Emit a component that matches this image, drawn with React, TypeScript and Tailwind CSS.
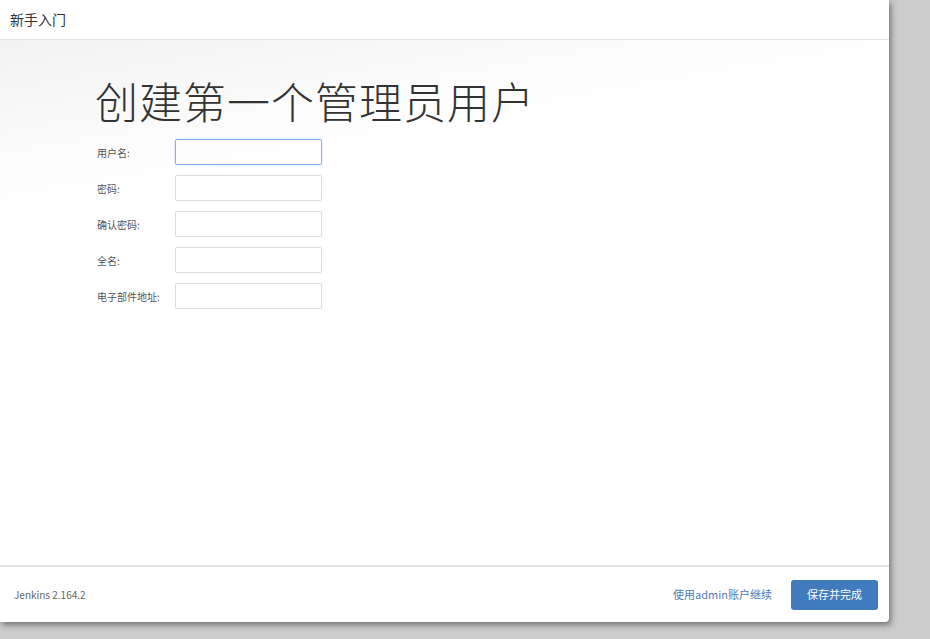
export default function App() {
  const font = { fontFamily: '"Noto Sans CJK SC", "Open Sans", sans-serif' };
  const rows = ["用户名:", "密码:", "确认密码:", "全名:", "电子部件地址:"];
  return (
    <div className="w-[930px] h-[639px] bg-[#cccccc] overflow-hidden" style={font}>
      <div className="w-[889px] h-[622px] bg-white rounded-br-[4px] shadow-[2px_3px_6px_rgba(0,0,0,0.45)] flex flex-col">
        <div className="h-[40px] border-b border-[#e5e5e5] flex items-center px-[10px] text-[14px] text-[#333]">新手入门</div>
        <div className="flex-1 bg-[linear-gradient(170deg,#f2f2f2_0%,#ffffff_25%)] pl-[95px] pt-[34px]">
          <h1 className="text-[43px] leading-[52px] text-[#333] font-light tracking-[1px] mb-[13px]">创建第一个管理员用户</h1>
          <div className="flex flex-col gap-[10px] pl-[2px]">
            {rows.map((r, i) => (
              <div key={r} className="flex items-center h-[26px]">
                <div className="w-[78px] text-[10px] text-[#555]">{r}</div>
                <div className={"w-[147px] h-[26px] rounded-[2px] border " + (i === 0 ? "border-[#8ab0ec] shadow-[0_0_2px_#b8cff5]" : "border-[#dddddd]")} />
              </div>
            ))}
          </div>
        </div>
        <div className="h-[57px] border-t-2 border-[#e3e3e3] flex items-center px-[14px]">
          <span className="text-[10px] text-[#666] flex-1">Jenkins 2.164.2</span>
          <span className="text-[11px] text-[#4f7cb5] mr-[19px]">使用admin账户继续</span>
          <span className="w-[87px] h-[30px] rounded-[3px] bg-[#3f7bbd] text-white text-[11px] flex items-center justify-center -mr-[3px]">保存并完成</span>
        </div>
      </div>
    </div>
  );
}
